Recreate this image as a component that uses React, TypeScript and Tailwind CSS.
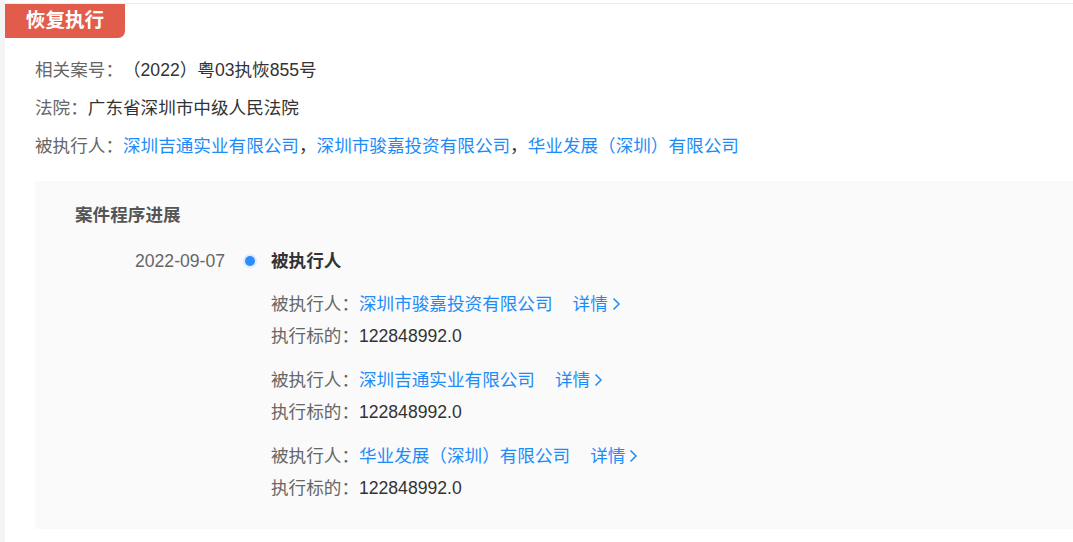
const font = { fontFamily: '"Liberation Sans", "Noto Sans CJK SC", sans-serif' }

const parties = ['深圳吉通实业有限公司', '深圳市骏嘉投资有限公司', '华业发展（深圳）有限公司']

const records = [
  { name: '深圳市骏嘉投资有限公司', amount: '122848992.0' },
  { name: '深圳吉通实业有限公司', amount: '122848992.0' },
  { name: '华业发展（深圳）有限公司', amount: '122848992.0' },
]

function Chevron() {
  return (
    <svg width="10" height="14" viewBox="0 0 10 14" className="ml-[3px] inline-block">
      <path d="M2.5 1.5l5.5 5.5-5.5 5.5" fill="none" stroke="currentColor" strokeWidth="1.5" />
    </svg>
  )
}

export default function App() {
  return (
    <div className="h-[542px] w-[1073px] overflow-hidden border-l-[5px] border-[#f4f4f4] bg-white pt-[3px] text-[17.6px]" style={font}>
      <div className="h-full border-t border-[#ececec]">
        {/* Badge */}
        <div className="flex h-[34px] w-[120px] items-center justify-center rounded-br-[7px] bg-[#e15c4a] text-[19.6px] font-bold text-white">
          恢复执行
        </div>

        {/* Basic info */}
        <div className="mt-[13px] pl-[30px]">
          <div className="flex h-[38px] items-center">
            <span className="text-[#666]">相关案号：</span>
            <span className="text-[#333]">（2022）粤03执恢855号</span>
          </div>
          <div className="flex h-[38px] items-center">
            <span className="text-[#666]">法院：</span>
            <span className="text-[#333]">广东省深圳市中级人民法院</span>
          </div>
          <div className="flex h-[38px] items-center">
            <span className="text-[#666]">被执行人：</span>
            {parties.map((p, i) => (
              <span key={p} className="text-[#1d8cf8]">
                {p}
                {i < parties.length - 1 && <span className="text-[#333]">，</span>}
              </span>
            ))}
          </div>
        </div>

        {/* Progress panel */}
        <div className="ml-[30px] mt-[16px] bg-[#fafafa] pb-[25px] pl-[40px] pt-[18px]">
          <div className="h-8 font-bold leading-8 text-[#555]">案件程序进展</div>

          <div className="mt-[14px] flex">
            <div className="h-8 w-[150px] text-right leading-8 text-[#666]">2022-09-07</div>
            <div className="flex h-8 w-[46px] items-center pl-[20px]">
              <span className="h-[10px] w-[10px] rounded-full bg-[#2f8cff] ring-2 ring-[#dcebff]" />
            </div>
            <div>
              <div className="h-8 font-bold leading-8 text-[#333]">被执行人</div>
              <div className="mt-[11px] flex flex-col gap-[12px]">
                {records.map((r) => (
                  <div key={r.name}>
                    <div className="flex h-8 items-center">
                      <span className="text-[#666]">被执行人：</span>
                      <span className="text-[#1d8cf8]">{r.name}</span>
                      <span className="ml-[20px] flex items-center text-[#1d8cf8]">
                        详情
                        <Chevron />
                      </span>
                    </div>
                    <div className="flex h-8 items-center">
                      <span className="text-[#666]">执行标的：</span>
                      <span className="text-[#333]">{r.amount}</span>
                    </div>
                  </div>
                ))}
              </div>
            </div>
          </div>
        </div>
      </div>
    </div>
  )
}
